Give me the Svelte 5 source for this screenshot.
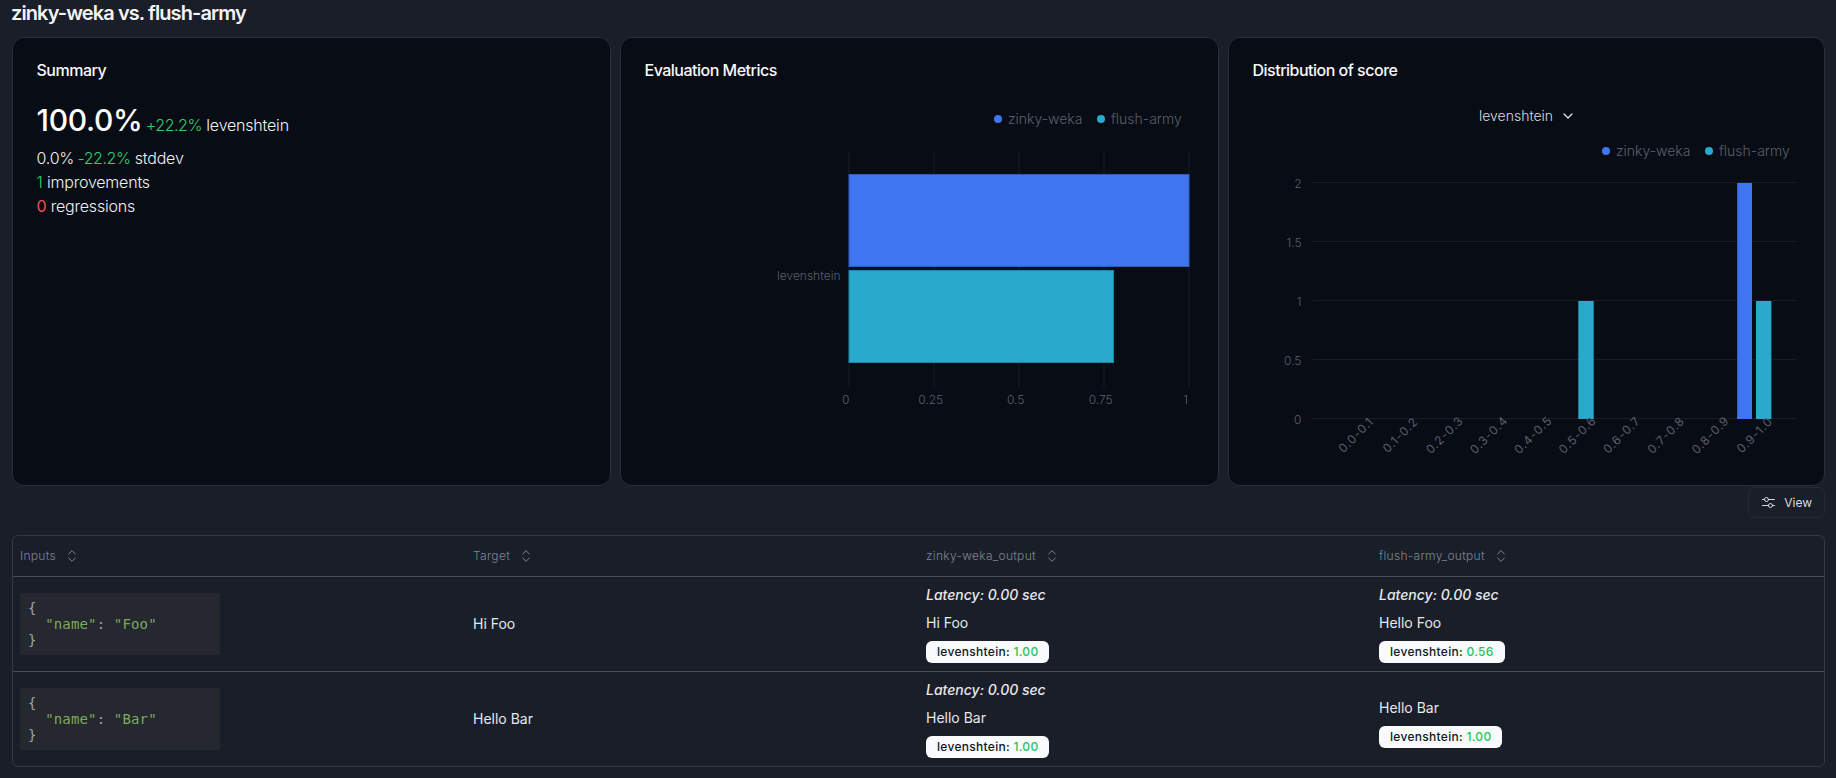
<script>
  const ticks = [
    { x: 849, label: '0' },
    { x: 934, label: '0.25' },
    { x: 1019, label: '0.5' },
    { x: 1104, label: '0.75' },
    { x: 1189, label: '1' }
  ];
  const yTicks = [
    { y: 183, label: '2' },
    { y: 242, label: '1.5' },
    { y: 301, label: '1' },
    { y: 360, label: '0.5' },
    { y: 419, label: '0' }
  ];
  const bins = ['0.0-0.1','0.1-0.2','0.2-0.3','0.3-0.4','0.4-0.5','0.5-0.6','0.6-0.7','0.7-0.8','0.8-0.9','0.9-1.0'];
  const columns = ['Inputs', 'Target', 'zinky-weka_output', 'flush-army_output'];
  const rows = [
    { input: 'Foo', target: 'Hi Foo',
      a: { latency: true, text: 'Hi Foo', score: '1.00' },
      b: { latency: true, text: 'Hello Foo', score: '0.56' } },
    { input: 'Bar', target: 'Hello Bar',
      a: { latency: true, text: 'Hello Bar', score: '1.00' },
      b: { latency: false, text: 'Hello Bar', score: '1.00' } }
  ];
</script>

{#snippet output(o)}
  {#if o.latency}<div class="latency">Latency: 0.00 sec</div>{/if}
  <div class="out-text">{o.text}</div>
  <div class="badge">levenshtein: <span class="good">{o.score}</span></div>
{/snippet}

<main class="page">
  <h1>zinky-weka vs. flush-army</h1>

  <section class="cards">
    <article class="card">
      <h2>Summary</h2>
      <div class="summary">
        <div class="headline"><span class="big">100.0%</span> <span class="delta">+22.2%</span> levenshtein</div>
        <div>0.0% <span class="delta">-22.2%</span> stddev</div>
        <div><span class="up">1</span> improvements</div>
        <div><span class="bad">0</span> regressions</div>
      </div>
    </article>

    <article class="card">
      <h2>Evaluation Metrics</h2>
      <svg class="chart metrics" viewBox="621 78 597 407">
        <g class="legend">
          <circle cx="998" cy="119" r="4" fill="#3f76f0" />
          <text x="1008" y="124">zinky-weka</text>
          <circle cx="1101" cy="119" r="4" fill="#28aacc" />
          <text x="1111" y="124">flush-army</text>
        </g>
        {#each ticks as t}
          <line class="grid" x1={t.x} x2={t.x} y1="151" y2="387" />
          <text class="axis" x={t.x - 3.3} y="404" text-anchor="middle">{t.label}</text>
        {/each}
        <rect x="849" y="174.5" width="340" height="92" fill="#3f76f0" stroke="#2f5bbd" />
        <rect x="849" y="270.5" width="264.5" height="92" fill="#28aacc" stroke="#1f86a1" />
        <text class="axis" x="840.5" y="280" text-anchor="end">levenshtein</text>
      </svg>
    </article>

    <article class="card">
      <h2>Distribution of score</h2>
      <div class="picker">
        <button type="button">
          levenshtein
          <svg width="16" height="16" viewBox="0 0 24 24" fill="none" stroke="currentColor" stroke-width="2" stroke-linecap="round" stroke-linejoin="round"><path d="m6 9 6 6 6-6" /></svg>
        </button>
      </div>
      <svg class="chart dist" viewBox="1229 134 595 351">
        <g class="legend">
          <circle cx="1606" cy="151" r="4" fill="#3f76f0" />
          <text x="1616" y="156">zinky-weka</text>
          <circle cx="1709" cy="151" r="4" fill="#28aacc" />
          <text x="1719" y="156">flush-army</text>
        </g>
        {#each yTicks as t}
          <line class="grid" x1="1313" x2="1797" y1={t.y - 0.5} y2={t.y - 0.5} />
          <text class="axis" x="1301.5" y={t.y + 5} text-anchor="end">{t.label}</text>
        {/each}
        <rect x="1578.3" y="301" width="15.4" height="118" fill="#28aacc" />
        <rect x="1737.2" y="183" width="14.8" height="236" fill="#3f76f0" />
        <rect x="1756" y="301" width="15.4" height="118" fill="#28aacc" />
        {#each bins as b, i}
          <text class="axis rot" text-anchor="middle" transform="translate({1358.9 + i * 44.3} 438) rotate(-45)">{b}</text>
        {/each}
      </svg>
    </article>
  </section>

  <div class="toolbar">
    <button type="button" class="view">
      <svg width="15" height="15" viewBox="0 0 15 15" fill="none" stroke="currentColor" stroke-width="1" stroke-linecap="round">
        <path d="M1.5 4.5h2M7.5 4.5h6M1.5 10.5h6M11.5 10.5h2" />
        <circle cx="5.5" cy="4.5" r="2" />
        <circle cx="9.5" cy="10.5" r="2" />
      </svg>
      View
    </button>
  </div>

  <div class="table-wrap">
    <table>
      <colgroup><col class="c" /><col class="c" /><col class="c" /><col /></colgroup>
      <thead>
        <tr>
          {#each columns as c}
            <th>
              <span class="th-in">{c}
                <svg width="16" height="16" viewBox="0 0 24 24" fill="none" stroke="currentColor" stroke-width="1.5" stroke-linecap="round" stroke-linejoin="round"><path d="m7 15 5 5 5-5" /><path d="m7 9 5-5 5 5" /></svg>
              </span>
            </th>
          {/each}
        </tr>
      </thead>
      <tbody>
        {#each rows as r}
          <tr>
            <td>
              <pre class="code">{'{'}
  <span class="str">"name"</span>: <span class="str">"{r.input}"</span>
{'}'}</pre>
            </td>
            <td>{r.target}</td>
            <td>{@render output(r.a)}</td>
            <td>{@render output(r.b)}</td>
          </tr>
        {/each}
      </tbody>
    </table>
  </div>
</main>

<style>
  :global(body) {
    margin: 0;
    background: #1a1e29;
    color: #e6e8ec;
    font-family: Inter, "Liberation Sans", sans-serif;
  }
  .page {
    padding: 0 11px 0 12px;
    height: 778px;
    box-sizing: border-box;
    overflow: hidden;
  }
  h1 {
    margin: 0 0 11px -1px;
    font-size: 20px;
    line-height: 26px;
    font-weight: 600;
    letter-spacing: -0.9px;
    color: #f3f4f6;
  }
  .cards {
    display: grid;
    grid-template-columns: 599px 599px 597px;
    gap: 9px;
  }
  .card {
    height: 449px;
    box-sizing: border-box;
    border: 1px solid #2a2e3a;
    border-radius: 12px;
    background: #080c15;
    display: flex;
    flex-direction: column;
    overflow: hidden;
  }
  h2 {
    margin: 0;
    padding: 24px 24px 0 23.5px;
    font-size: 16px;
    line-height: 16px;
    font-weight: 500;
    letter-spacing: -0.5px;
    color: #f8f9fa;
  }
  .summary {
    padding: 24px 24px 0 23.5px;
    font-size: 16px;
    line-height: 24px;
    font-weight: 300;
    letter-spacing: -0.2px;
    color: #eef0f3;
  }
  .headline {
    line-height: 36px;
    margin-bottom: 3px;
  }
  .big {
    font-size: 30px;
    font-weight: 500;
    color: #fff;
    letter-spacing: -0.3px;
  }
  .delta, .up {
    color: #2fcf6c;
  }
  .delta {
    letter-spacing: -0.45px;
    margin-left: -1px;
  }
  .good { color: #22c55e; }
  .bad {
    color: #f05252;
    font-weight: 400;
  }
  .chart {
    display: block;
    flex: none;
    font-family: Inter, "Liberation Sans", sans-serif;
  }
  .metrics { width: 597px; height: 407px; }
  .dist { width: 595px; height: 351px; }
  .legend text {
    font-size: 14px;
    font-weight: 300;
    fill: #5b5f6b;
  }
  .axis {
    font-size: 12px;
    font-weight: 300;
    fill: #5b5f6b;
  }
  .rot {
    letter-spacing: 0.8px;
    font-weight: 400;
  }
  .grid {
    stroke: #181c26;
    stroke-width: 1;
  }
  .picker {
    margin-top: 20px;
    height: 36px;
    display: flex;
    justify-content: center;
    align-items: center;
  }
  .picker button {
    display: flex;
    align-items: center;
    gap: 7px;
    padding: 0 0 0 2px;
    background: none;
    border: 0;
    color: #d9dbe0;
    font: 300 14px/20px Inter, "Liberation Sans", sans-serif;
  }
  .toolbar {
    display: flex;
    justify-content: flex-end;
    margin: 1px 0 17px;
  }
  .view {
    height: 31px;
    box-sizing: border-box;
    display: flex;
    align-items: center;
    gap: 8px;
    padding: 0 12px;
    background: none;
    border: 1px solid #242936;
    border-radius: 6px;
    color: #d8dadf;
    font: 400 12px/16px Inter, "Liberation Sans", sans-serif;
  }
  .table-wrap {
    border: 1px solid #343844;
    border-radius: 6px;
    overflow: hidden;
  }
  table {
    width: 100%;
    table-layout: fixed;
    border-collapse: collapse;
    font-size: 14px;
    line-height: 20px;
    font-weight: 400;
  }
  .c { width: 453px; }
  th {
    height: 40px;
    padding: 0 7px;
    text-align: left;
    font-size: 12px;
    font-weight: 300;
    letter-spacing: 0.3px;
    color: #7d8596;
  }
  .th-in {
    display: inline-flex;
    align-items: center;
    gap: 8px;
  }
  thead tr { border-bottom: 1px solid #4a4e5a; }
  tbody tr + tr { border-top: 1px solid #4a4e5a; }
  td {
    padding: 8px 7px;
    vertical-align: middle;
    color: #e6e8ec;
  }
  .code {
    margin: 0;
    width: 200px;
    height: 62px;
    box-sizing: border-box;
    padding: 7px 8px;
    background: #25282f;
    font: 400 14px/16px "DejaVu Sans Mono", monospace;
    letter-spacing: 0.15px;
    color: #9ca3af;
  }
  .str { color: #7ea85f; }
  .latency {
    font-style: italic;
    font-weight: 500;
    color: #e6e8ec;
  }
  .out-text { margin-top: 8px; }
  .badge {
    display: inline-block;
    vertical-align: top;
    margin-top: 8px;
    height: 22px;
    box-sizing: border-box;
    padding: 3px 11px;
    border-radius: 6px;
    background: #f9fafb;
    color: #111827;
    font-size: 12px;
    line-height: 16px;
    font-weight: 500;
    letter-spacing: 0.3px;
  }
</style>
